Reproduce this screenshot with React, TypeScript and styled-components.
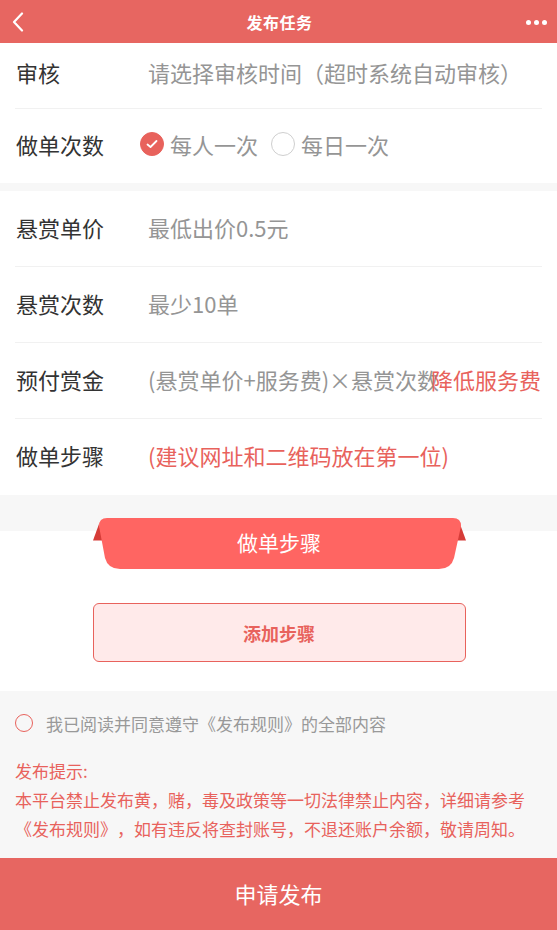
import React, { FC, useState } from 'react';
import styled, { createGlobalStyle } from 'styled-components';

const GlobalStyle = createGlobalStyle`
	html, body {
		margin: 0;
		padding: 0;
		background: #fff;
	}
	body {
		font-family: 'Noto Sans CJK SC', 'Noto Sans', sans-serif;
		text-spacing-trim: space-all;
	}
	* {
		box-sizing: border-box;
	}
`;

const RED = '#e8625c';

const App: FC = () => {
	const [once, setOnce] = useState('person');
	const [agreed, setAgreed] = useState(false);

	return (
		<Page>
			<GlobalStyle />
			<Header>
				<BackBtn>
					<svg width='12' height='20' viewBox='0 0 12 20'>
						<polyline
							points='10,1.5 2,10 10,18.5'
							fill='none'
							stroke='#fff'
							strokeWidth='2.2'
							strokeLinecap='round'
							strokeLinejoin='round'
						/>
					</svg>
				</BackBtn>
				<Title>发布任务</Title>
				<More>
					<Dot />
					<Dot />
					<Dot />
				</More>
			</Header>

			<Card>
				<Row $h={66} $pb={8}>
					<Label>审核</Label>
					<Value>请选择审核时间（超时系统自动审核）</Value>
				</Row>
				<Row $h={74} $last>
					<Label>做单次数</Label>
					<RadioGroup>
						<RadioItem onClick={() => setOnce('person')}>
							<RadioCircle $on={once === 'person'}>
								{once === 'person' && (
									<svg width='12' height='10' viewBox='0 0 12 10'>
										<polyline
											points='1.5,5.5 4.5,8 10.5,2'
											fill='none'
											stroke='#fff'
											strokeWidth='1.8'
											strokeLinecap='round'
											strokeLinejoin='round'
										/>
									</svg>
								)}
							</RadioCircle>
							每人一次
						</RadioItem>
						<RadioItem onClick={() => setOnce('day')}>
							<RadioCircle $on={once === 'day'}>
								{once === 'day' && (
									<svg width='12' height='10' viewBox='0 0 12 10'>
										<polyline
											points='1.5,5.5 4.5,8 10.5,2'
											fill='none'
											stroke='#fff'
											strokeWidth='1.8'
											strokeLinecap='round'
											strokeLinejoin='round'
										/>
									</svg>
								)}
							</RadioCircle>
							每日一次
						</RadioItem>
					</RadioGroup>
				</Row>
			</Card>

			<Card $gap>
				<Row $h={76}>
					<Label>悬赏单价</Label>
					<Value>最低出价0.5元</Value>
				</Row>
				<Row $h={76}>
					<Label>悬赏次数</Label>
					<Value>最少10单</Value>
				</Row>
				<Row $h={76}>
					<Label>预付赏金</Label>
					<Value>(悬赏单价+服务费)×悬赏次数</Value>
					<LinkText>降低服务费</LinkText>
				</Row>
				<Row $h={76} $last>
					<Label>做单步骤</Label>
					<Value $red>(建议网址和二维码放在第一位)</Value>
				</Row>
			</Card>

			<StepsArea>
				<Ribbon>
					<svg width='373' height='52' viewBox='0 0 373 52'>
						<polygon points='0,22.5 6,6 10,22.5' fill='#d63c38' />
						<polygon points='373,22.5 367,6 363,22.5' fill='#d63c38' />
						<path
							d='M14 0 H360 Q368 0 368 8 L361 40 Q358 51 346 51 H27 Q15 51 12 40 L6 8 Q6 0 14 0 Z'
							fill='#ff6562'
						/>
					</svg>
					<RibbonText>做单步骤</RibbonText>
				</Ribbon>
				<AddButton type='button'>添加步骤</AddButton>
			</StepsArea>

			<Notice>
				<Agree onClick={() => setAgreed(!agreed)}>
					<AgreeCircle $on={agreed} />
					我已阅读并同意遵守《发布规则》的全部内容
				</Agree>
				<Tips>
					<div>发布提示:</div>
					<div>
						本平台禁止发布黄，赌，毒及政策等一切法律禁止内容，详细请参考《发布规则》，如有违反将查封账号，不退还账户余额，敬请周知。
					</div>
				</Tips>
			</Notice>

			<Submit type='button'>申请发布</Submit>
		</Page>
	);
};

export default App;

const Page = styled.div`
	width: 100%;
	min-height: 930px;
	display: flex;
	flex-direction: column;
	background: #fff;
`;

const Header = styled.div`
	height: 43px;
	background: #e76661;
	display: flex;
	align-items: center;
	justify-content: space-between;
	padding: 0 10px 0 12px;
	color: #fff;
`;

const BackBtn = styled.div`
	width: 40px;
	display: flex;
	align-items: center;
	padding-top: 1px;
`;

const Title = styled.div`
	font-size: 16px;
	font-weight: 700;
	letter-spacing: 0.5px;
`;

const More = styled.div`
	width: 40px;
	display: flex;
	justify-content: flex-end;
	gap: 3px;
	padding-top: 1px;
`;

const Dot = styled.span`
	width: 5px;
	height: 5px;
	border-radius: 50%;
	background: #fff;
`;

const Card = styled.div<{ $gap?: boolean }>`
	background: #fff;
	border-top: ${(p) => (p.$gap ? '8px solid #f7f7f7' : 'none')};
`;

const Row = styled.div<{ $h: number; $pb?: number; $last?: boolean }>`
	height: ${(p) => p.$h}px;
	margin: 0 15px;
	padding: 0 1px ${(p) => (p.$pb ?? 4)}px;
	display: flex;
	align-items: center;
	border-bottom: ${(p) => (p.$last ? 'none' : '1px solid #f1f1f1')};
	font-size: 22px;
	white-space: nowrap;
`;

const Label = styled.div`
	width: 132px;
	flex-shrink: 0;
	color: #333;
`;

const Value = styled.div<{ $red?: boolean }>`
	flex: 1;
	min-width: 0;
	color: ${(p) => (p.$red ? RED : '#959595')};
	overflow: visible;
`;

const LinkText = styled.div`
	flex-shrink: 0;
	color: ${RED};
	margin-left: -30px;
`;

const RadioGroup = styled.div`
	display: flex;
	align-items: center;
	gap: 13px;
	margin-left: -8px;
	color: #959595;
`;

const RadioItem = styled.div`
	display: flex;
	align-items: center;
	gap: 6px;
	cursor: pointer;
`;

const RadioCircle = styled.span<{ $on: boolean }>`
	width: 24px;
	height: 24px;
	border-radius: 50%;
	display: flex;
	align-items: center;
	justify-content: center;
	background: ${(p) => (p.$on ? RED : '#fff')};
	border: 1px solid ${(p) => (p.$on ? RED : '#cfcfcf')};
`;

const StepsArea = styled.div`
	background: linear-gradient(#f7f7f7 0 36px, #fff 36px);
	padding: 23px 0 29px;
	display: flex;
	flex-direction: column;
	align-items: center;
`;

const Ribbon = styled.div`
	position: relative;
	width: 373px;
	height: 52px;
	display: flex;
	align-items: center;
	justify-content: center;
	margin-left: 1px;

	svg {
		position: absolute;
		left: 0;
		top: 0;
	}
`;

const RibbonText = styled.span`
	position: relative;
	color: #fff;
	font-size: 21px;
	padding-bottom: 4px;
`;

const AddButton = styled.button`
	margin-top: 33px;
	margin-left: 1px;
	width: 373px;
	height: 59px;
	border: 1px solid ${RED};
	border-radius: 6px;
	background: #ffeaea;
	color: ${RED};
	font-family: inherit;
	font-size: 18px;
	font-weight: 700;
	cursor: pointer;
`;

const Notice = styled.div`
	flex: 1;
	background: #f7f7f7;
	padding: 22px 25px 13px 15px;
`;

const Agree = styled.div`
	display: flex;
	align-items: center;
	height: 20px;
	gap: 13px;
	color: #999;
	font-size: 17px;
	cursor: pointer;
`;

const AgreeCircle = styled.span<{ $on: boolean }>`
	width: 18px;
	height: 18px;
	border-radius: 50%;
	border: 1.5px solid ${RED};
	background: ${(p) => (p.$on ? RED : 'transparent')};
	flex-shrink: 0;
`;

const Tips = styled.div`
	margin-top: 23px;
	color: ${RED};
	font-size: 17px;
	line-height: 29px;
`;

const Submit = styled.button`
	height: 72px;
	width: 100%;
	border: none;
	background: #e76661;
	color: #fff;
	font-family: inherit;
	font-size: 22px;
	padding-bottom: 4px;
	cursor: pointer;
`;
